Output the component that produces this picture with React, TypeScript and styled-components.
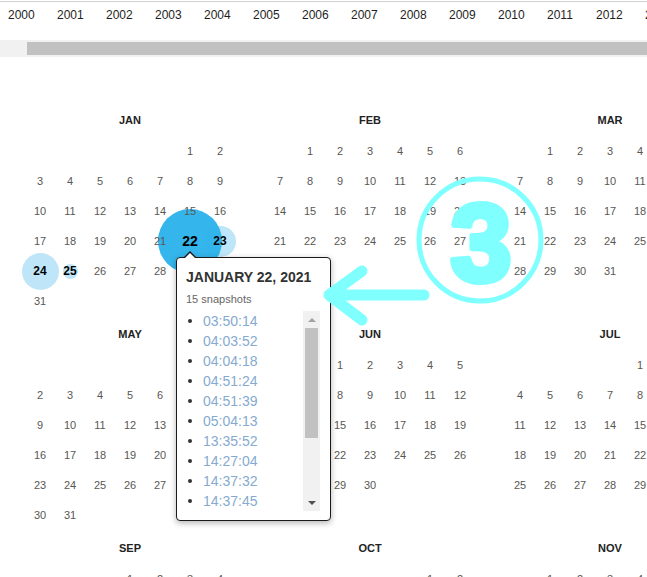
import React from 'react';
import styled, { createGlobalStyle } from 'styled-components';

const Global = createGlobalStyle`
  html, body { margin: 0; padding: 0; background: #fff; overflow: hidden; }
  body { font-family: "Liberation Sans", Arial, Helvetica, sans-serif; }
`;

const Page = styled.div`
  position: relative;
  width: 647px;
  height: 577px;
  overflow: hidden;
  background: #fff;
`;

const YearBar = styled.div`
  display: flex;
  margin-top: 1px;
  height: 38px;
  border-top: 1px solid #d0d0d0;
  padding-left: 8px;
  overflow: hidden;
`;

const Year = styled.div`
  flex: none;
  width: 49px;
  padding-top: 6px;
  font-size: 12px;
  line-height: 14px;
  color: #1e1e1e;
`;

const ScrollTrack = styled.div`
  display: flex;
  height: 17px;
  box-sizing: border-box;
  padding: 2px 0 2px 27px;
  background: #f1f1f1;
`;

const ScrollThumb = styled.div`
  flex: 1;
  background: #c1c1c1;
`;

const Calendar = styled.div`
  display: grid;
  grid-template-columns: repeat(3, 210px);
  column-gap: 30px;
  width: max-content;
  margin-top: 48px;
  padding-left: 25px;
`;

const Month = styled.div`
  display: flex;
  flex-direction: column;
  margin-bottom: 3px;
`;

const MonthName = styled.div`
  height: 31px;
  line-height: 31px;
  text-align: center;
  font-size: 11px;
  font-weight: bold;
  color: #222;
`;

const Days = styled.div`
  display: grid;
  grid-template-columns: repeat(7, 30px);
  grid-template-rows: repeat(6, 30px);
`;

const DayCell = styled.div<{ $col: number }>`
  position: relative;
  grid-column: ${(p) => p.$col + 1};
  display: flex;
  align-items: center;
  justify-content: center;
`;

const DayNum = styled.span<{ $hit: boolean; $big: boolean }>`
  position: relative;
  z-index: 3;
  font-size: ${(p) => (p.$big ? 14 : p.$hit ? 12 : 11)}px;
  font-weight: ${(p) => (p.$hit ? 'bold' : 'normal')};
  color: ${(p) => (p.$hit ? '#000' : '#5a5753')};
  line-height: 14px;
`;

const Bubble = styled.span<{ $size: number; $color: string; $z: number }>`
  position: absolute;
  left: 50%;
  top: 50%;
  width: ${(p) => p.$size}px;
  height: ${(p) => p.$size}px;
  margin-left: ${(p) => -p.$size / 2}px;
  margin-top: ${(p) => -p.$size / 2}px;
  border-radius: 50%;
  background: ${(p) => p.$color};
  z-index: ${(p) => p.$z};
`;

const Popup = styled.div`
  position: absolute;
  top: 31px;
  left: 1px;
  z-index: 10;
  width: 155px;
  height: 264px;
  box-sizing: border-box;
  padding: 10px 10px 9px 9px;
  background: #fff;
  border: 1px solid #1a1a1a;
  border-radius: 4px;
  box-shadow: 0 2px 6px rgba(0, 0, 0, 0.3);
  display: flex;
  flex-direction: column;
  text-align: left;

  &::before,
  &::after {
    content: '';
    position: absolute;
    left: 7px;
    width: 0;
    height: 0;
    border-left: 6px solid transparent;
    border-right: 6px solid transparent;
  }
  &::before {
    top: -7px;
    border-bottom: 6px solid #1a1a1a;
  }
  &::after {
    top: -5px;
    left: 8px;
    border-left-width: 5px;
    border-right-width: 5px;
    border-bottom: 5px solid #fff;
  }
`;

const PopTitle = styled.div`
  font-size: 14px;
  font-weight: bold;
  line-height: 18px;
  color: #333;
  white-space: nowrap;
`;

const PopCount = styled.div`
  margin-top: 6px;
  font-size: 11px;
  line-height: 14px;
  color: #666;
`;

const ListWrap = styled.div`
  display: flex;
  height: 200px;
  margin-top: 5px;
`;

const TimeList = styled.ul`
  flex: 1;
  margin: 0;
  padding: 0;
  list-style: none;
  overflow: hidden;
`;

const TimeItem = styled.li`
  display: flex;
  align-items: center;
  height: 20px;
  font-size: 14px;
  color: #86aacf;

  &::before {
    content: '';
    flex: none;
    width: 4px;
    height: 4px;
    margin: 0 11px 0 2px;
    border-radius: 50%;
    background: #333;
  }
`;

const FakeScroll = styled.div`
  flex: none;
  width: 17px;
  display: flex;
  flex-direction: column;
  background: #f1f1f1;
`;

const ScrollBtn = styled.div<{ $down?: boolean }>`
  flex: none;
  height: 17px;
  display: flex;
  align-items: center;
  justify-content: center;

  &::after {
    content: '';
    width: 0;
    height: 0;
    border-left: 4px solid transparent;
    border-right: 4px solid transparent;
    ${(p) =>
      p.$down ? 'border-top: 4px solid #505050;' : 'border-bottom: 4px solid #a3a3a3;'}
  }
`;

const PopThumb = styled.div`
  flex: none;
  height: 110px;
  margin: 0 2px;
  background: #c1c1c1;
`;

const Spacer = styled.div`
  flex: 1;
`;

const Annotation = styled.svg`
  position: absolute;
  left: 0;
  top: 0;
  z-index: 20;
  pointer-events: none;
`;

const MONTHS = ['JAN', 'FEB', 'MAR', 'APR', 'MAY', 'JUN', 'JUL', 'AUG', 'SEP', 'OCT', 'NOV', 'DEC'];
const SHOWN = [0, 1, 2, 4, 5, 6, 8, 9, 10];
const YEARS = Array.from({ length: 14 }, (_, i) => 2000 + i);
const TIMES = [
  '03:50:14', '04:03:52', '04:04:18', '04:51:24', '04:51:39',
  '05:04:13', '13:35:52', '14:27:04', '14:37:32', '14:37:45',
];

type Hit = { size: number; color: string; z: number };
const HITS: Record<string, Hit> = {
  '0-22': { size: 64, color: 'rgba(44, 178, 235, 0.96)', z: 2 },
  '0-23': { size: 31, color: '#bee6f8', z: 1 },
  '0-24': { size: 37, color: '#bee6f8', z: 1 },
  '0-25': { size: 15, color: '#bee6f8', z: 1 },
};

function SnapshotPopup() {
  return (
    <Popup>
      <PopTitle>JANUARY 22, 2021</PopTitle>
      <PopCount>15 snapshots</PopCount>
      <ListWrap>
        <TimeList>
          {TIMES.map((t) => (
            <TimeItem key={t}>{t}</TimeItem>
          ))}
        </TimeList>
        <FakeScroll>
          <ScrollBtn />
          <PopThumb />
          <Spacer />
          <ScrollBtn $down />
        </FakeScroll>
      </ListWrap>
    </Popup>
  );
}

function MonthView({ m }: { m: number }) {
  const first = new Date(2021, m, 1).getDay();
  const count = new Date(2021, m + 1, 0).getDate();
  const days = Array.from({ length: count }, (_, i) => i + 1);
  return (
    <Month>
      <MonthName>{MONTHS[m]}</MonthName>
      <Days>
        {days.map((d) => {
          const col = (first + d - 1) % 7;
          const hit = HITS[`${m}-${d}`];
          const big = m === 0 && d === 22;
          return (
            <DayCell key={d} $col={col} style={{ gridRow: Math.floor((first + d - 1) / 7) + 1 }}>
              {hit && <Bubble $size={hit.size} $color={hit.color} $z={hit.z} />}
              <DayNum $hit={!!hit} $big={big}>{d}</DayNum>
              {big && <SnapshotPopup />}
            </DayCell>
          );
        })}
      </Days>
    </Month>
  );
}

export default function App() {
  return (
    <>
      <Global />
      <Page>
        <YearBar>
          {YEARS.map((y) => (
            <Year key={y}>{y}</Year>
          ))}
        </YearBar>
        <ScrollTrack>
          <ScrollThumb />
        </ScrollTrack>
        <Calendar>
          {SHOWN.map((m) => (
            <MonthView key={m} m={m} />
          ))}
        </Calendar>
        <Annotation width="647" height="577" viewBox="0 0 647 577">
          <circle cx="480" cy="240" r="61" fill="none" stroke="#80ffff" strokeWidth="5" />
          <text
            x="481"
            y="281"
            textAnchor="middle"
            fontFamily='"Liberation Sans", Arial, sans-serif'
            fontWeight="bold"
            fontSize="110"
            fill="#80ffff"
            stroke="#80ffff"
            strokeWidth="6"
            strokeLinejoin="round"
          >
            3
          </text>
          <path
            d="M362 271 L329 295 L362 320 M329 295 L424 295"
            fill="none"
            stroke="#80ffff"
            strokeWidth="11"
            strokeLinecap="round"
            strokeLinejoin="round"
          />
        </Annotation>
      </Page>
    </>
  );
}
